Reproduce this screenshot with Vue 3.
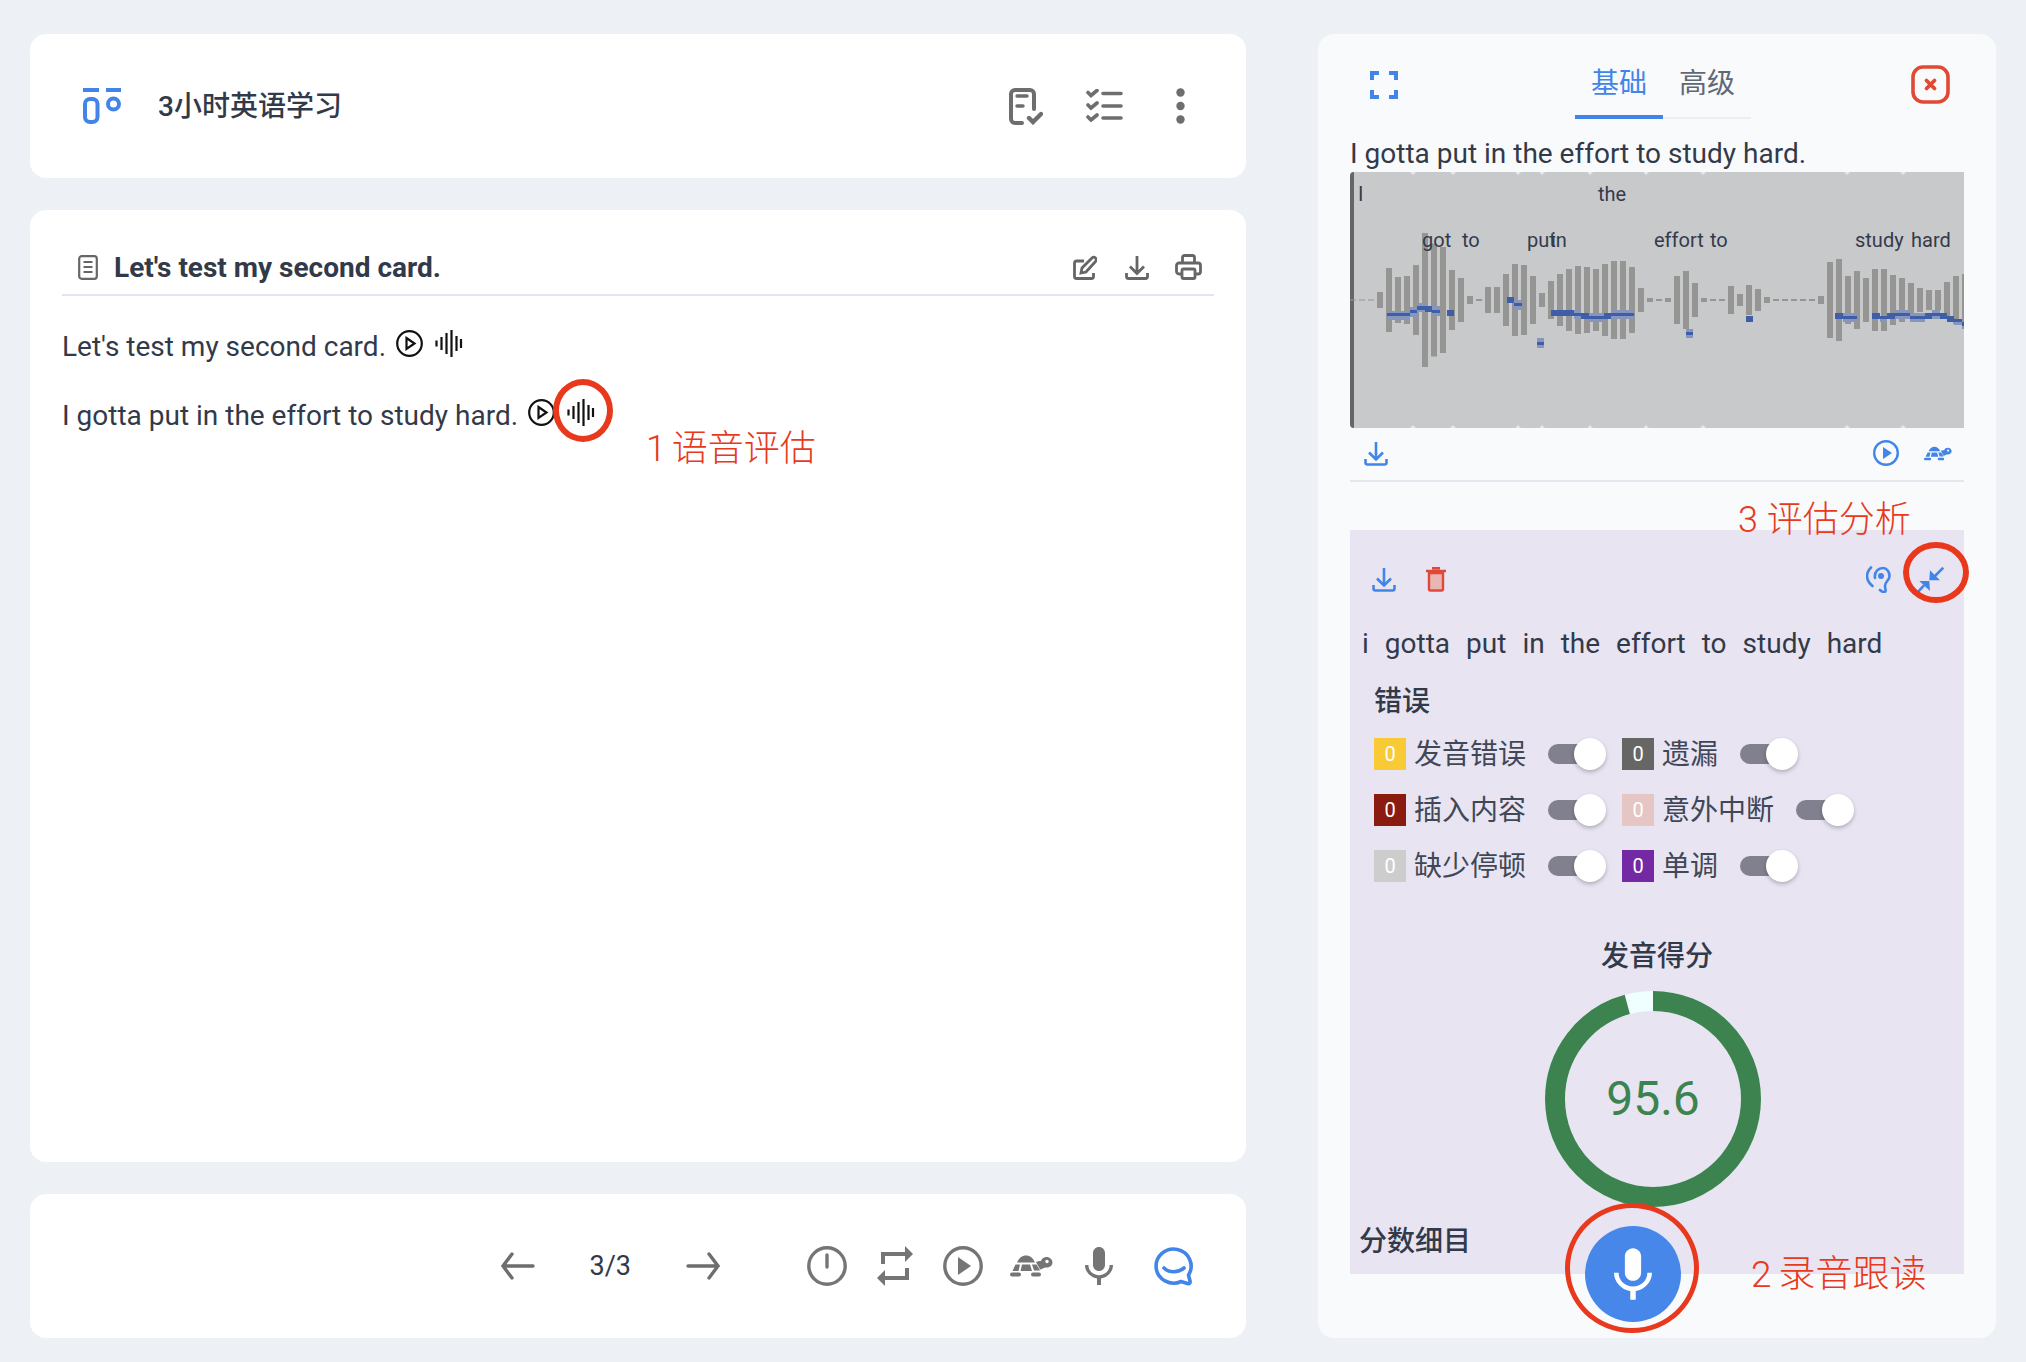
<template>
  <div class="page">
    <div class="left">
      <section class="card top-card">
        <svg class="logo" width="38" height="36" viewBox="0 0 38 36" fill="none" stroke="#4285e8" stroke-width="4">
          <path d="M0 2h16M23 2h15" />
          <rect x="2" y="11" width="12.500" height="23" rx="5" />
          <circle cx="30.500" cy="16" r="5.500" />
        </svg>
        <h1 class="title">3小时英语学习</h1>
        <div class="top-tools">
          <svg width="34" height="37" viewBox="0 0 34 37" fill="none" stroke="#6e6e6e" stroke-width="4" stroke-linecap="round">
            <path d="M13 35H6a4 4 0 0 1-4-4V6a4 4 0 0 1 4-4h15a4 4 0 0 1 4 4v15" />
            <path d="M8 8h10M8 18h6" stroke-width="3.400" />
            <path d="M20 30l4 4 8-8" stroke-width="4.400" />
          </svg>
          <svg class="checks" width="37" height="33" viewBox="0 0 37 33" fill="none" stroke="#6e6e6e" stroke-width="3.600" stroke-linecap="round">
            <path d="M2 3.500l3 3 6-5M2 16l3 3 6-5M2 28l3 3 6-5" />
            <path d="M17 4.500h18M17 17h18M17 29h18" />
          </svg>
          <svg class="dots" width="9" height="36" viewBox="0 0 9 36" fill="#6e6e6e">
            <circle cx="4.500" cy="4.500" r="4.200" />
            <circle cx="4.500" cy="18" r="4.200" />
            <circle cx="4.500" cy="31.500" r="4.200" />
          </svg>
        </div>
      </section>

      <section class="card doc-card">
        <header class="doc-head">
          <svg width="20" height="25" viewBox="0 0 20 25" fill="none" stroke="#666" stroke-width="2.200">
            <rect x="1.200" y="1.200" width="17.600" height="22.600" rx="2.500" />
            <path d="M5.500 7h9M5.500 12h9M5.500 17h9" />
          </svg>
          <h2 class="doc-title">Let's test my second card.</h2>
          <div class="doc-tools">
            <svg class="edit" width="24" height="25" viewBox="0 0 24 25" fill="none" stroke="#666" stroke-width="2.800">
              <path d="M11 6H3.500a2 2 0 0 0-2 2v13.500a2 2 0 0 0 2 2h15a2 2 0 0 0 2-2V18" />
              <path d="M8 18l1-5L19 3a2.200 2.200 0 0 1 3.500 3.500L13 17z" />
            </svg>
            <svg width="24" height="25" viewBox="0 0 24 25" fill="none" stroke="#666" stroke-width="2.800">
              <path d="M12 1v17M5 11.500l7 7 7-7M1.500 18v3.500a2 2 0 0 0 2 2h17a2 2 0 0 0 2-2V18" />
            </svg>
            <svg width="27" height="26" viewBox="0 0 27 26" fill="none" stroke="#666" stroke-width="2.800">
              <path d="M7.500 9V3.500a2 2 0 0 1 2-2h8a2 2 0 0 1 2 2V9" />
              <path d="M7 20H4a2.500 2.500 0 0 1-2.500-2.500v-6A2.500 2.500 0 0 1 4 9h19a2.500 2.500 0 0 1 2.500 2.500v6A2.500 2.500 0 0 1 23 20h-3" />
              <rect x="7" y="15" width="13" height="9.500" rx="1.500" />
            </svg>
          </div>
        </header>
        <div class="line" v-for="text in lines" :key="text">
          <span>{{ text }}</span>
          <svg class="line-icon" width="27" height="27" viewBox="0 0 27 27" fill="none" stroke="#111" stroke-width="2.200">
            <circle cx="13.500" cy="13.500" r="12.300" />
            <path d="M10.500 8l8 5.500-8 5.500z" />
          </svg>
          <svg class="line-icon wave-icon" width="30" height="27" viewBox="0 0 30 27" fill="none" stroke="#111" stroke-width="2.200">
            <path d="M1.500 10.500v6M6.500 7v13M11.500 3v21M16.500 0v27M21.500 6v15M26 9v9" />
          </svg>
        </div>
      </section>

      <section class="card player-card">
        <div class="pager">
          <svg width="34" height="28" viewBox="0 0 34 28" fill="none" stroke="#6e6e6e" stroke-width="3.400" stroke-linecap="round">
            <path d="M32 14H2M11 2L2 14l9 12" />
          </svg>
          <span class="page-num">3/3</span>
          <svg width="34" height="28" viewBox="0 0 34 28" fill="none" stroke="#6e6e6e" stroke-width="3.400" stroke-linecap="round">
            <path d="M2 14h30M23 2l9 12-9 12" />
          </svg>
        </div>
        <div class="player-tools">
          <svg width="40" height="40" viewBox="0 0 40 40" fill="none" stroke="#757575" stroke-width="3.400">
            <circle cx="20" cy="20" r="18.200" />
            <path d="M20 9v12" stroke-linecap="round" />
          </svg>
          <svg width="36" height="40" viewBox="3 2 18 20" fill="#757575">
            <path d="M7 7h10v3l4-4-4-4v3H5v6h2V7zm10 10H7v-3l-4 4 4 4v-3h12v-6h-2v4z" />
          </svg>
          <svg width="40" height="40" viewBox="0 0 40 40" fill="none" stroke="#757575" stroke-width="3.400">
            <circle cx="20" cy="20" r="18.200" />
            <path d="M15 11l13 9-13 9z" fill="#757575" stroke="none" />
          </svg>
          <svg class="turtle grey" width="43" height="22" viewBox="0 0 43 22" fill="currentColor">
            <path d="M7 7.500C9 3 12 .5 16 .5S23 3 25 7.500z" />
            <path d="M5.500 9.500H10L8.500 16H2.500zM12 9.500h8L22 16H10.500zM22 9.500h4.500L30 15.500h-6z" />
            <path d="M26 7c2-1 3-1 5-1 1-3 3-4 5.500-4 3.500 0 6 2.500 6 5.500 0 3-3 5-6 5-2 0-3 .5-4.500 1.500l-2 .5z" />
            <circle cx="37" cy="6.500" r="1.700" fill="#fff" />
            <rect x="0" y="17.500" width="11" height="4" rx="2" />
            <rect x="21" y="17.500" width="10" height="4" rx="2" />
          </svg>
          <svg class="mic" width="28" height="38" viewBox="5 2 14 19" fill="#757575">
            <path d="M12 14c1.660 0 2.990-1.340 2.990-3L15 5c0-1.660-1.340-3-3-3S9 3.340 9 5v6c0 1.660 1.340 3 3 3zm5.300-3c0 3-2.540 5.100-5.300 5.100S6.700 14 6.700 11H5c0 3.410 2.720 6.230 6 6.720V21h2v-3.280c3.280-.48 6-3.300 6-6.720h-1.700z" />
          </svg>
          <svg class="chat" width="41" height="39" viewBox="0 0 41 39" fill="none" stroke="#4285e8" stroke-width="3.600" stroke-linecap="round" stroke-linejoin="round">
            <path d="M28 34.500a17.500 17 0 1 1 7.500-6.500l1.500 6c.5 2-.5 3-2.500 2.500z" />
            <path d="M11 21c5 5 14 5 20 0" />
          </svg>
        </div>
      </section>
    </div>

    <aside class="card side">
      <header class="side-head">
        <svg class="expand" width="28" height="28" viewBox="0 0 28 28" fill="none" stroke="#4285e8" stroke-width="4">
          <path d="M2 9V2h7M19 2h7v7M26 19v7h-7M9 26H2v-7" />
        </svg>
        <div class="tabs">
          <span class="tab active">基础</span>
          <span class="tab">高级</span>
        </div>
        <svg class="close" width="39" height="39" viewBox="0 0 39 39" fill="none" stroke="#e04a35">
          <rect x="2" y="2" width="35" height="35" rx="10" stroke-width="3.600" />
          <path d="M15.500 15.500l8 8M23.500 15.500l-8 8" stroke-width="3.800" stroke-linecap="round" />
        </svg>
      </header>

      <p class="sentence">I gotta put in the effort to study hard.</p>

      <div class="wave">
        <svg width="614" height="256" viewBox="1350 172 614 256">
          <rect x="1350" y="172" width="4" height="256" fill="#666" />
          <path v-for="x in ticks" :key="x" :d="`M${x - 3} 172h6l-3 3zM${x - 3} 428h6l-3-3z`" fill="#e6e7ea" />
          <path d="M1350 300h25" stroke="#959694" stroke-width="1" stroke-dasharray="6 3" />
          <rect
            v-for="bar in bars"
            :key="bar.x"
            :x="bar.x"
            :y="300 - bar.h / 2"
            width="6"
            :height="bar.h"
            fill="#959694"
          />
          <rect
            v-for="(p, i) in pitch"
            :key="i"
            :x="p[0]"
            :y="p[2]"
            :width="p[1] - p[0]"
            :height="p[3]"
            :fill="p[4] ? '#8895bd' : '#3f5ea8'"
          />
        </svg>
        <span
          v-for="w in waveWords"
          :key="w.text + w.x"
          class="wave-word"
          :style="{ left: w.x - 1350 + 'px', top: w.y + 'px' }"
        >{{ w.text }}</span>
      </div>

      <div class="wave-tools">
        <svg class="dl" width="24" height="25" viewBox="0 0 24 25" fill="none" stroke="#4285e8" stroke-width="2.600">
          <path d="M12 1v17M5 11.500l7 7 7-7M1.500 18v3.500a2 2 0 0 0 2 2h17a2 2 0 0 0 2-2V18" />
        </svg>
        <svg class="wave-play" width="26" height="26" viewBox="0 0 26 26" fill="none" stroke="#4285e8" stroke-width="2.400">
          <circle cx="13" cy="13" r="11.800" />
          <path d="M10 7l9 6-9 6z" fill="#4285e8" stroke="none" />
        </svg>
        <svg class="turtle blue" width="28" height="15" viewBox="0 0 43 22" fill="currentColor">
          <path d="M7 7.500C9 3 12 .5 16 .5S23 3 25 7.500z" />
          <path d="M5.500 9.500H10L8.500 16H2.500zM12 9.500h8L22 16H10.500zM22 9.500h4.500L30 15.500h-6z" />
          <path d="M26 7c2-1 3-1 5-1 1-3 3-4 5.500-4 3.500 0 6 2.500 6 5.500 0 3-3 5-6 5-2 0-3 .5-4.500 1.500l-2 .5z" />
          <circle cx="37" cy="6.500" r="1.700" fill="#f9fafc" />
          <rect x="0" y="17.500" width="11" height="4" rx="2" />
          <rect x="21" y="17.500" width="10" height="4" rx="2" />
        </svg>
      </div>

      <div class="panel">
        <div class="panel-tools">
          <svg width="24" height="25" viewBox="0 0 24 25" fill="none" stroke="#4285e8" stroke-width="2.600">
            <path d="M12 1v17M5 11.500l7 7 7-7M1.500 18v3.500a2 2 0 0 0 2 2h17a2 2 0 0 0 2-2V18" />
          </svg>
          <svg class="trash" width="20" height="25" viewBox="0 0 20 25">
            <path d="M3 6h14v16a1.500 1.500 0 0 1-1.500 1.500h-11A1.500 1.500 0 0 1 3 22z" fill="#e8b6b4" stroke="#e0483a" stroke-width="2.400" />
            <path d="M0 4h20M6 1.200h8" stroke="#e0483a" stroke-width="2.400" />
          </svg>
          <svg class="ear" width="25" height="27" viewBox="0 0 25 27" fill="none" stroke="#4285e8" stroke-width="2.600" stroke-linecap="round">
            <path d="M9 12C8 5 13 2 17 2c4 0 6.500 4 6.500 8 0 5-4.500 5-4.500 10 0 3 2 6-1 6-2 0-3-1-4-2" />
            <path d="M5 1.500C-.5 7-.5 14 6.500 20" />
            <circle cx="15" cy="10" r="3" fill="#4285e8" stroke="none" />
          </svg>
          <svg class="shrink" width="28" height="28" viewBox="0 0 28 28" fill="#4285e8" stroke="none">
            <path d="M27.300 1.700L19 10M8 19.300L1 27" fill="none" stroke="#4285e8" stroke-width="2.600" />
            <path d="M13.300 14.300L14 4.300 24 14.300zM13.300 15H3.300L14 25z" />
          </svg>
        </div>

        <div class="words">
          <span v-for="w in words" :key="w">{{ w }}</span>
        </div>

        <h3 class="err-title">错误</h3>
        <div class="legend">
          <div class="legend-item" v-for="item in legend" :key="item.label">
            <span class="badge" :style="{ background: item.color }">0</span>
            <span class="legend-label">{{ item.label }}</span>
            <span class="switch"><i></i></span>
          </div>
        </div>

        <h3 class="score-title">发音得分</h3>
        <div class="ring">
          <svg width="216" height="216" viewBox="0 0 216 216" fill="none">
            <circle cx="108" cy="108" r="98" stroke="#effefe" stroke-width="20" />
            <circle
              cx="108"
              cy="108"
              r="98"
              stroke="#3c8350"
              stroke-width="20"
              transform="rotate(-90 108 108)"
              :stroke-dasharray="ringDash"
            />
          </svg>
          <span class="ring-value">{{ score }}</span>
        </div>
        <h3 class="detail-title">分数细目</h3>
      </div>

      <button class="record">
        <svg width="38" height="52" viewBox="5 2 14 19" fill="#fff">
          <path d="M12 14c1.660 0 2.990-1.340 2.990-3L15 5c0-1.660-1.340-3-3-3S9 3.340 9 5v6c0 1.660 1.340 3 3 3zm5.300-3c0 3-2.540 5.100-5.300 5.100S6.700 14 6.700 11H5c0 3.410 2.720 6.230 6 6.720V21h2v-3.280c3.280-.48 6-3.300 6-6.720h-1.700z" />
        </svg>
      </button>
    </aside>

    <!-- red marks drawn over the screenshot -->
    <span class="ring-mark mark-a"></span>
    <span class="ring-mark mark-b"></span>
    <span class="ring-mark mark-c"></span>
    <span class="note note-a">1 语音评估</span>
    <span class="note note-b">3 评估分析</span>
    <span class="note note-c">2 录音跟读</span>
  </div>
</template>

<script setup>
const lines = ["Let's test my second card.", 'I gotta put in the effort to study hard.']
const words = ['i', 'gotta', 'put', 'in', 'the', 'effort', 'to', 'study', 'hard']

const legend = [
  { label: '发音错误', color: '#f8ca36' },
  { label: '遗漏', color: '#666664' },
  { label: '插入内容', color: '#8b1a10' },
  { label: '意外中断', color: '#e5c6c4' },
  { label: '缺少停顿', color: '#cdcdcd' },
  { label: '单调', color: '#7229a3' },
]

const score = 95.6
const ringDash = `${(2 * Math.PI * 98 * score) / 100} 1000`

// bar heights, one every 9px starting at x=1377
const heights = [
  16, 64, 46, 48, 70, 134, 113, 106, 60, 44, 8, 2, 26, 26, 52, 72, 70, 48, 14, 38, 52, 62, 68, 66, 62, 72, 78, 78, 66,
  24, 4, 2, 4, 48, 58, 34, 4, 2, 2, 28, 12, 30, 22, 6, 2, 2, 2, 2, 2, 8, 76, 82, 48, 58, 44, 62, 62, 50, 44, 34, 24, 20,
  20, 36, 48, 52,
]
const bars = heights.map((h, i) => ({ x: 1377 + i * 9, h }))

const ticks = [1413, 1453, 1518, 1542, 1590, 1646, 1703, 1847, 1903]

// x1, x2, y, height, light
const pitch = [
  [1387, 1410, 311, 9, 1],
  [1410, 1417, 307, 10, 1],
  [1417, 1425, 303, 9, 1],
  [1432, 1440, 306, 10, 1],
  [1514, 1522, 300, 10, 1],
  [1537, 1544, 338, 10, 1],
  [1574, 1581, 310, 9, 1],
  [1589, 1604, 313, 9, 1],
  [1611, 1634, 310, 9, 1],
  [1686, 1693, 329, 9, 1],
  [1843, 1857, 313, 9, 1],
  [1880, 1887, 316, 6, 1],
  [1895, 1910, 310, 9, 1],
  [1910, 1925, 313, 9, 1],
  [1932, 1940, 310, 9, 1],
  [1954, 1962, 319, 6, 1],
  [1962, 1964, 321, 8, 1],
  [1387, 1410, 313, 3],
  [1410, 1417, 310, 3],
  [1417, 1425, 306, 4],
  [1425, 1432, 306, 6],
  [1432, 1440, 310, 3],
  [1447, 1454, 310, 6],
  [1507, 1514, 297, 6],
  [1514, 1522, 303, 3],
  [1537, 1544, 342, 3],
  [1551, 1574, 310, 6],
  [1574, 1581, 313, 3],
  [1581, 1589, 313, 6],
  [1589, 1604, 316, 3],
  [1604, 1611, 313, 6],
  [1611, 1634, 313, 3],
  [1686, 1693, 332, 3],
  [1746, 1753, 316, 6],
  [1835, 1843, 313, 6],
  [1843, 1857, 316, 3],
  [1872, 1880, 313, 6],
  [1880, 1887, 316, 3],
  [1887, 1895, 313, 6],
  [1895, 1910, 313, 3],
  [1910, 1925, 316, 3],
  [1925, 1932, 313, 6],
  [1932, 1940, 313, 3],
  [1940, 1947, 313, 6],
  [1947, 1954, 316, 6],
  [1954, 1962, 319, 3],
  [1962, 1964, 322, 4],
]

const waveWords = [
  { text: 'I', x: 1358, y: 10 },
  { text: 'the', x: 1598, y: 10 },
  { text: 'got', x: 1422, y: 56 },
  { text: 'to', x: 1462, y: 56 },
  { text: 'put', x: 1527, y: 56 },
  { text: 'in', x: 1551, y: 56 },
  { text: 'effort', x: 1654, y: 56 },
  { text: 'to', x: 1710, y: 56 },
  { text: 'study', x: 1855, y: 56 },
  { text: 'hard', x: 1911, y: 56 },
]
</script>

<style>
html,
body {
  margin: 0;
  background: #edf0f5;
}
</style>

<style scoped>
.page {
  position: relative;
  box-sizing: border-box;
  width: 2026px;
  height: 1362px;
  padding: 34px 30px 24px 30px;
  display: grid;
  grid-template-columns: 1216px 678px;
  column-gap: 72px;
  background: #edf0f5;
  color: #323a4a;
  font-family: Roboto, 'Noto Sans CJK SC', sans-serif;
  font-size: 28px;
  overflow: hidden;
}

svg {
  display: block;
  flex: none;
}

.left {
  display: flex;
  flex-direction: column;
  gap: 32px;
}

.card {
  background: #fff;
  border-radius: 16px;
}

.top-card {
  height: 144px;
  flex: none;
  display: flex;
  align-items: center;
  padding: 0 61px 0 53px;
}

.title {
  margin: -4px 0 0 37px;
  font-size: 28px;
  font-weight: 500;
}

.top-tools {
  margin-left: auto;
  display: flex;
  align-items: center;
  gap: 43px;
}

.checks {
  margin-top: -1px;
}

.dots {
  margin-left: 10px;
}

.doc-card {
  flex: 1;
  padding: 0 32px;
}

.doc-head {
  display: flex;
  align-items: center;
  height: 86px;
  box-sizing: border-box;
  padding: 30px 12px 0 16px;
  border-bottom: 2px solid #e2e5ee;
}

.doc-title {
  margin: 0 0 0 16px;
  font-size: 28px;
  font-weight: 700;
}

.doc-tools {
  margin-left: auto;
  display: flex;
  align-items: center;
  gap: 26px;
}

.edit {
  margin-right: 2px;
}

.line {
  display: flex;
  align-items: center;
  height: 38px;
  margin-top: 31px;
}

.line-icon {
  margin-left: 10px;
  margin-top: -5px;
}

.wave-icon {
  margin-left: 12px;
}

.player-card {
  height: 144px;
  flex: none;
  display: flex;
  align-items: center;
  justify-content: flex-end;
  padding-right: 52px;
}

.pager {
  display: flex;
  align-items: center;
  gap: 55px;
}

.page-num {
  font-size: 27px;
}

.player-tools {
  margin-left: 87px;
  display: flex;
  align-items: center;
  gap: 30px;
}

.turtle.grey {
  color: #757575;
  margin-left: -3px;
}

.mic {
  margin-left: 2px;
}

.chat {
  margin-left: 10px;
}

.side {
  position: relative;
  background: #f9fafc;
  padding: 0 32px;
}

.side-head {
  box-sizing: border-box;
  height: 100px;
  padding-top: 30px;
  display: flex;
  align-items: flex-start;
}

.expand {
  margin: 7px 0 0 20px;
}

.tabs {
  margin-left: 177px;
  display: flex;
}

.tab {
  width: 88px;
  box-sizing: border-box;
  height: 55px;
  line-height: 40px;
  text-align: center;
  font-size: 28px;
  color: #5f6877;
  border-bottom: 2px solid #eceef2;
}

.tab.active {
  color: #4285e8;
  border-bottom: 4px solid #4285e8;
}

.close {
  margin: 1px 14px 0 auto;
}

.sentence {
  margin: 0;
  padding-top: 2px;
  line-height: 36px;
}

.wave {
  position: relative;
  width: 614px;
  height: 256px;
  background: #c8c9cb;
  border-radius: 4px 0 0 4px;
  overflow: hidden;
}

.wave-word {
  position: absolute;
  font-size: 20px;
  line-height: 24px;
  color: #333b4b;
  white-space: nowrap;
}

.wave-tools {
  box-sizing: border-box;
  height: 54px;
  padding: 0 12px 2px 14px;
  display: flex;
  align-items: center;
  border-bottom: 2px solid #e4e7ee;
}

.wave-play {
  margin-left: auto;
}

.turtle.blue {
  color: #4285e8;
  margin-left: 25px;
}

.panel {
  margin-top: 48px;
  height: 744px;
  box-sizing: border-box;
  padding-top: 36px;
  background: #e8e4f2;
  overflow: hidden;
}

.panel-tools {
  display: flex;
  align-items: center;
  height: 27px;
  padding: 0 20px 0 22px;
}

.trash {
  margin-left: 30px;
}

.ear {
  margin-left: auto;
}

.shrink {
  margin-left: 25px;
}

.words {
  display: flex;
  gap: 16px;
  line-height: 36px;
  margin-top: 33px;
  padding-left: 12px;
}

.err-title,
.score-title,
.detail-title {
  margin: 0;
  font-size: 28px;
  line-height: 36px;
  font-weight: 500;
}

.err-title {
  margin-top: 22px;
  padding-left: 24px;
}

.legend {
  margin-top: 18px;
  padding-left: 24px;
  display: grid;
  grid-template-columns: 248px auto;
  row-gap: 24px;
}

.legend-item {
  display: flex;
  align-items: center;
  height: 32px;
}

.badge {
  width: 32px;
  height: 32px;
  line-height: 32px;
  text-align: center;
  color: #fff;
  font-size: 20px;
}

.legend-label {
  margin: -4px 0 0 8px;
  font-size: 28px;
  color: #404756;
}

.switch {
  position: relative;
  margin-left: 22px;
  width: 52px;
  height: 20px;
  border-radius: 10px;
  background: #80808f;
}

.switch i {
  position: absolute;
  left: 26px;
  top: -6px;
  width: 32px;
  height: 32px;
  border-radius: 50%;
  background: #fff;
  box-shadow: 0 2px 4px rgba(0, 0, 0, 0.25);
}

.score-title {
  margin-top: 57px;
  text-align: center;
}

.ring {
  position: relative;
  width: 216px;
  height: 216px;
  margin: 16px 0 0 195px;
}

.ring-value {
  position: absolute;
  inset: -2px 0 0;
  display: flex;
  align-items: center;
  justify-content: center;
  font-size: 48px;
  color: #3c8350;
}

.detail-title {
  margin-top: 17px;
  padding-left: 9px;
}

.record {
  position: absolute;
  left: 267px;
  top: 1192px;
  width: 96px;
  height: 96px;
  padding: 0;
  border: none;
  border-radius: 50%;
  background: #4687e9;
  display: flex;
  align-items: center;
  justify-content: center;
}

.ring-mark {
  position: absolute;
  box-sizing: border-box;
  border: 6.500px solid #e8391c;
  border-radius: 50%;
}

.mark-a {
  left: 553px;
  top: 379px;
  width: 60px;
  height: 63px;
}

.mark-b {
  left: 1903px;
  top: 542px;
  width: 66px;
  height: 61px;
}

.mark-c {
  left: 1565px;
  top: 1203px;
  width: 134px;
  height: 130px;
  border-width: 5.500px;
}

.note {
  position: absolute;
  font-size: 36px;
  line-height: 44px;
  font-weight: 300;
  color: #e8391c;
  white-space: nowrap;
}

.note-a {
  left: 646px;
  top: 427px;
  word-spacing: -3px;
}

.note-b {
  left: 1738px;
  top: 498px;
}

.note-c {
  left: 1751px;
  top: 1253px;
  font-size: 37px;
  word-spacing: -2px;
}
</style>
